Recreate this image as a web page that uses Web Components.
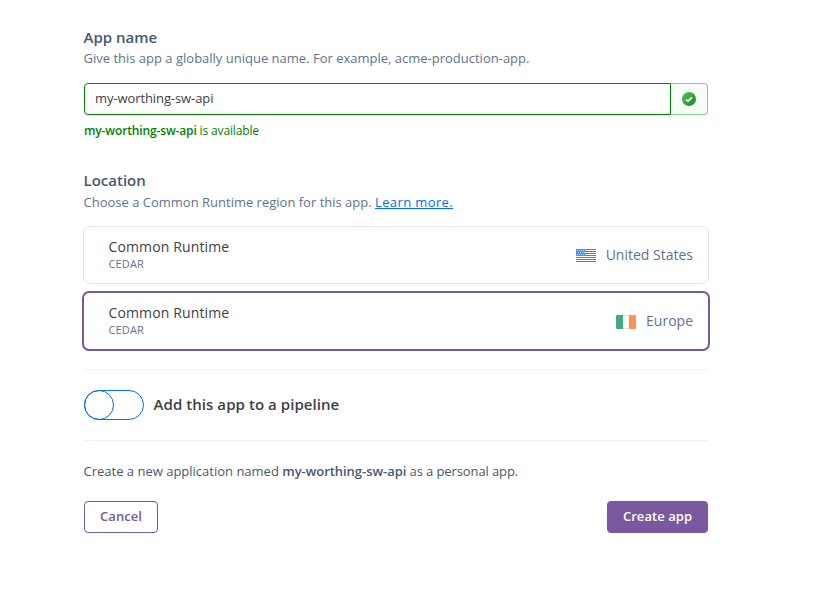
<!DOCTYPE html>
<html lang="en">
<head>
<meta charset="utf-8">
<title>Create New App</title>
<style>
html, body { margin: 0; background: #fff; }
body { font-family: "Open Sans", "Noto Sans", sans-serif; color: #62738d; }
</style>
</head>
<body>
<create-app-form></create-app-form>
<script>
const define = (name, html) => {
  const template = document.createElement('template');
  template.innerHTML = html;
  customElements.define(name, class extends HTMLElement {
    constructor() {
      super();
      this.attachShadow({ mode: 'open' }).append(template.content.cloneNode(true));
    }
  });
};

define('form-heading', `
<style>
:host { display: block; margin-left: -.5px; }
h2 { margin: 0; font-size: 15px; line-height: 20px; font-weight: 600; color: #475870; }
p { margin: var(--gap, 1px) 0 0; font-size: 13px; line-height: 20px; color: #62738d; white-space: nowrap; }
</style>
<h2><slot name="title"></slot></h2>
<p><slot></slot></p>`);

define('name-field', `
<style>
:host { display: block; }
.row { display: flex; height: 32px; }
.input { flex: 1; box-sizing: border-box; border: 1px solid #008400; border-radius: 4px 0 0 4px; padding: 0 10px; font-size: 13px; line-height: 28px; color: #3f3f44; letter-spacing: -.09px; }
.addon { width: 37px; box-sizing: border-box; border: 1px solid #86cf95; border-left: 0; border-radius: 0 4px 4px 0; background: #f6fcf7; display: flex; align-items: center; justify-content: center; }
svg { display: block; }
.msg { margin-top: 6px; font-size: 12px; line-height: 20px; color: #008400; letter-spacing: -.14px; }
</style>
<div class="row">
  <div class="input"><slot></slot></div>
  <div class="addon"><svg width="14" height="14" viewBox="0 0 14 14">
    <defs><linearGradient id="g" x1="0" y1="0" x2="1" y2="1"><stop offset="0" stop-color="#5fbd65"/><stop offset="1" stop-color="#138a18"/></linearGradient></defs>
    <circle cx="7" cy="7" r="7" fill="url(#g)"/><path d="M3.9 7.500 6 9.200 10 5.400" fill="none" stroke="#fff" stroke-width="1.700"/>
  </svg></div>
</div>
<div class="msg"><slot name="message"></slot></div>`);

define('region-option', `
<style>
:host { display: flex; box-sizing: border-box; height: 58px; margin: 0 -1px; border: 1px solid #e2e7f0; border-radius: 6px; padding: 0 15px 0 24.500px; align-items: center; justify-content: space-between; }
:host([selected]) { height: 60px; margin: 0 -2px; border: 2px solid #79589f; border-radius: 7px; }
.label { padding-bottom: 3px; }
.name { font-size: 14px; line-height: 20px; color: #3f3f44; letter-spacing: .13px; }
.stack { font-size: 11px; line-height: 14px; color: #62738d; letter-spacing: .15px; }
.region { display: flex; align-items: center; gap: 10px; font-size: 14px; line-height: 20px; color: #62738d; }
</style>
<div class="label"><div class="name"><slot name="name"></slot></div><div class="stack"><slot name="stack"></slot></div></div>
<div class="region"><slot name="flag"></slot><span><slot></slot></span></div>`);

define('flag-us', `
<style>:host { display: block; } svg { display: block; }</style>
<svg width="20" height="13" viewBox="0 0 20 13">
  <rect width="20" height="13" fill="#fff"/>
  <path d="M0 .5h20M0 2.500h20M0 4.500h20M0 6.500h20M0 8.500h20M0 10.500h20M0 12.500h20" stroke="#d9534a"/>
  <rect width="9" height="7" fill="#4a90e8"/>
  <path d="M1 1.500h8M2 3.500h7M1 5.500h8" stroke="#c4dcf8" stroke-dasharray="1 1"/>
</svg>`);

define('flag-ie', `
<style>:host { display: block; margin-top: 1px; } svg { display: block; }</style>
<svg width="20" height="14" viewBox="0 0 20 14">
  <path d="M7 0H1.200A1.200 1.200 0 0 0 0 1.200v11.600A1.200 1.200 0 0 0 1.200 14H7z" fill="#41ab7d"/>
  <path d="M13 0h5.800A1.200 1.200 0 0 1 20 1.200v11.600A1.200 1.200 0 0 1 18.800 14H13z" fill="#ff9252"/>
  <path d="M7 .5h6M7 13.500h6" stroke="#e4e4e4"/>
</svg>`);

define('toggle-row', `
<style>
:host { display: flex; box-sizing: border-box; height: 72px; border: solid #eef1f6; border-width: 1px 0; align-items: center; gap: 9.500px; }
.track { width: 60px; height: 30px; box-sizing: border-box; border: 1px solid #0070ee; border-radius: 15px; display: flex; }
.knob { width: 30px; height: 30px; margin: -1px; box-sizing: border-box; border: 1px solid #0070ee; border-radius: 50%; }
.label { padding-bottom: 2px; font-size: 15px; line-height: 20px; font-weight: 600; color: #3f3f44; letter-spacing: .06px; }
</style>
<div class="track"><div class="knob"></div></div><div class="label"><slot></slot></div>`);

define('push-button', `
<style>
:host { display: block; }
button { display: block; height: 32px; width: var(--w); box-sizing: border-box; padding: 0 0 2px; border: 1px solid #79589f; border-radius: 4px; background: #fff; color: #79589f; font: 600 13px/28px "Open Sans", "Noto Sans", sans-serif; letter-spacing: .06px; }
:host([primary]) button { background: #79589f; border-color: #79589f; color: #fff; }
:host([primary]) { border-radius: 4px; box-shadow: 0 0 1px #b9a8d0; }
</style>
<button><slot></slot></button>`);

define('create-app-form', `
<style>
:host { display: block; width: 624px; padding: 27px 0 0 84px; }
name-field { margin-top: 15px; }
.location { margin-top: 29px; --gap: 2px; }
a { color: #0070ee; text-decoration: underline; letter-spacing: .38px; }
.options { display: flex; flex-direction: column; gap: 7px; margin-top: 14px; }
toggle-row { margin-top: 18px; }
.summary { margin: 20px 0 20px -.5px; font-size: 13px; line-height: 20px; color: #475870; white-space: nowrap; }
.summary b { letter-spacing: -.04px; }
.tail { letter-spacing: -.1px; }
b { font-weight: 600; }
.actions { display: flex; justify-content: space-between; }
</style>
<form-heading><span slot="title">App name</span>Give this app a globally unique name. For example, acme-production-app.</form-heading>
<name-field>my-worthing-sw-api<span slot="message"><b>my-worthing-sw-api</b> is available</span></name-field>
<form-heading class="location"><span slot="title">Location</span>Choose a Common Runtime region for this app. <a>Learn more.</a></form-heading>
<div class="options">
  <region-option><span slot="name">Common Runtime</span><span slot="stack">CEDAR</span><flag-us slot="flag"></flag-us>United States</region-option>
  <region-option selected><span slot="name">Common Runtime</span><span slot="stack">CEDAR</span><flag-ie slot="flag"></flag-ie>Europe</region-option>
</div>
<toggle-row>Add this app to a pipeline</toggle-row>
<p class="summary">Create a new application named <b>my-worthing-sw-api</b><span class="tail"> as a personal app.</span></p>
<div class="actions">
  <push-button style="--w:74px">Cancel</push-button>
  <push-button primary style="--w:101px">Create app</push-button>
</div>`);
</script>
</body>
</html>
